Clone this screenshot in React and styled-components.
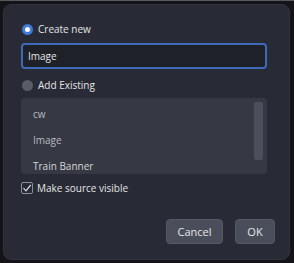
import React, { useState } from "react";
import styled, { createGlobalStyle } from "styled-components";

const GlobalStyle = createGlobalStyle`
  html, body {
    margin: 0;
    padding: 0;
    background: #141418;
    width: 294px;
    height: 263px;
    overflow: hidden;
  }
  body {
    font-family: "Open Sans", "Noto Sans", sans-serif;
  }
`;

const Screen = styled.div`
  width: 294px;
  height: 263px;
  box-sizing: border-box;
  padding: 3px 4px 3px 3px;
  border-top: 1px solid #55585f;
  display: flex;
`;

const Dialog = styled.div`
  flex: 1;
  background: #282b35;
  border-radius: 8px;
  border: 1px solid #30333c;
  padding: 15px 22px 15px 17px;
  display: flex;
  flex-direction: column;
  color: #e4e4e6;
  font-size: 10px;
`;

const Option = styled.label`
  display: flex;
  align-items: center;
  gap: 5px;
  height: 18px;
  margin-left: 1px;
  margin-top: ${({ gap }) => gap || 0}px;
`;

const Radio = styled.span`
  width: 11px;
  height: 11px;
  border-radius: 50%;
  box-sizing: border-box;
  background: ${({ checked }) => (checked ? "#ffffff" : "#5a5d66")};
  border: ${({ checked }) => (checked ? "3px solid #3f7ad6" : "none")};
`;

const TextField = styled.input`
  margin-top: 5px;
  height: 26px;
  box-sizing: border-box;
  background: #1f2129;
  border: 2px solid #3d69b8;
  border-radius: 4px;
  color: #e4e4e6;
  font: inherit;
  padding: 0 5px;
  outline: none;
`;

const List = styled.div`
  margin-top: 4px;
  height: 76px;
  background: #363944;
  border-radius: 4px;
  position: relative;
  overflow: hidden;
  padding: 3px 0 0 12px;
  box-sizing: border-box;
`;

const Item = styled.div`
  height: 26px;
  line-height: 26px;
  color: ${({ dim }) => (dim ? "#b8bac0" : "#d4d5d9")};
`;

const Scrollbar = styled.div`
  position: absolute;
  right: 4px;
  top: 4px;
  width: 9px;
  height: 58px;
  background: #4b4f5b;
  border-radius: 2px;
`;

const CheckRow = styled.label`
  display: flex;
  align-items: center;
  gap: 4px;
  margin-top: 7px;
`;

const Box = styled.span`
  width: 12px;
  height: 12px;
  box-sizing: border-box;
  border: 1px solid #8c8f96;
  border-radius: 2px;
  display: flex;
  align-items: center;
  justify-content: center;
`;

const Footer = styled.div`
  margin-top: auto;
  margin-right: -8px;
  display: flex;
  justify-content: flex-end;
  gap: 12px;
`;

const Button = styled.button`
  height: 25px;
  min-width: ${({ wide }) => (wide ? "57px" : "40px")};
  background: #4a4e5b;
  border: 1px solid #555966;
  border-radius: 4px;
  color: #e6e6e8;
  font: inherit;
  font-size: 11px;
  padding: 0 10px;
`;

export default function App() {
  const [mode, setMode] = useState("new");
  return (
    <>
      <GlobalStyle />
      <Screen>
        <Dialog>
          <Option onClick={() => setMode("new")}>
            <Radio checked={mode === "new"} />
            Create new
          </Option>
          <TextField defaultValue="Image" />
          <Option gap={7} onClick={() => setMode("existing")}>
            <Radio checked={mode === "existing"} />
            Add Existing
          </Option>
          <List>
            <Item dim>cw</Item>
            <Item dim>Image</Item>
            <Item>Train Banner</Item>
            <Scrollbar />
          </List>
          <CheckRow>
            <Box>
              <svg width="10" height="10" viewBox="0 0 10 10">
                <path d="M1.5 5.2 L4 7.8 L8.7 2" fill="none" stroke="#e0e0e2" strokeWidth="1.2" />
              </svg>
            </Box>
            Make source visible
          </CheckRow>
          <Footer>
            <Button wide>Cancel</Button>
            <Button>OK</Button>
          </Footer>
        </Dialog>
      </Screen>
    </>
  );
}
